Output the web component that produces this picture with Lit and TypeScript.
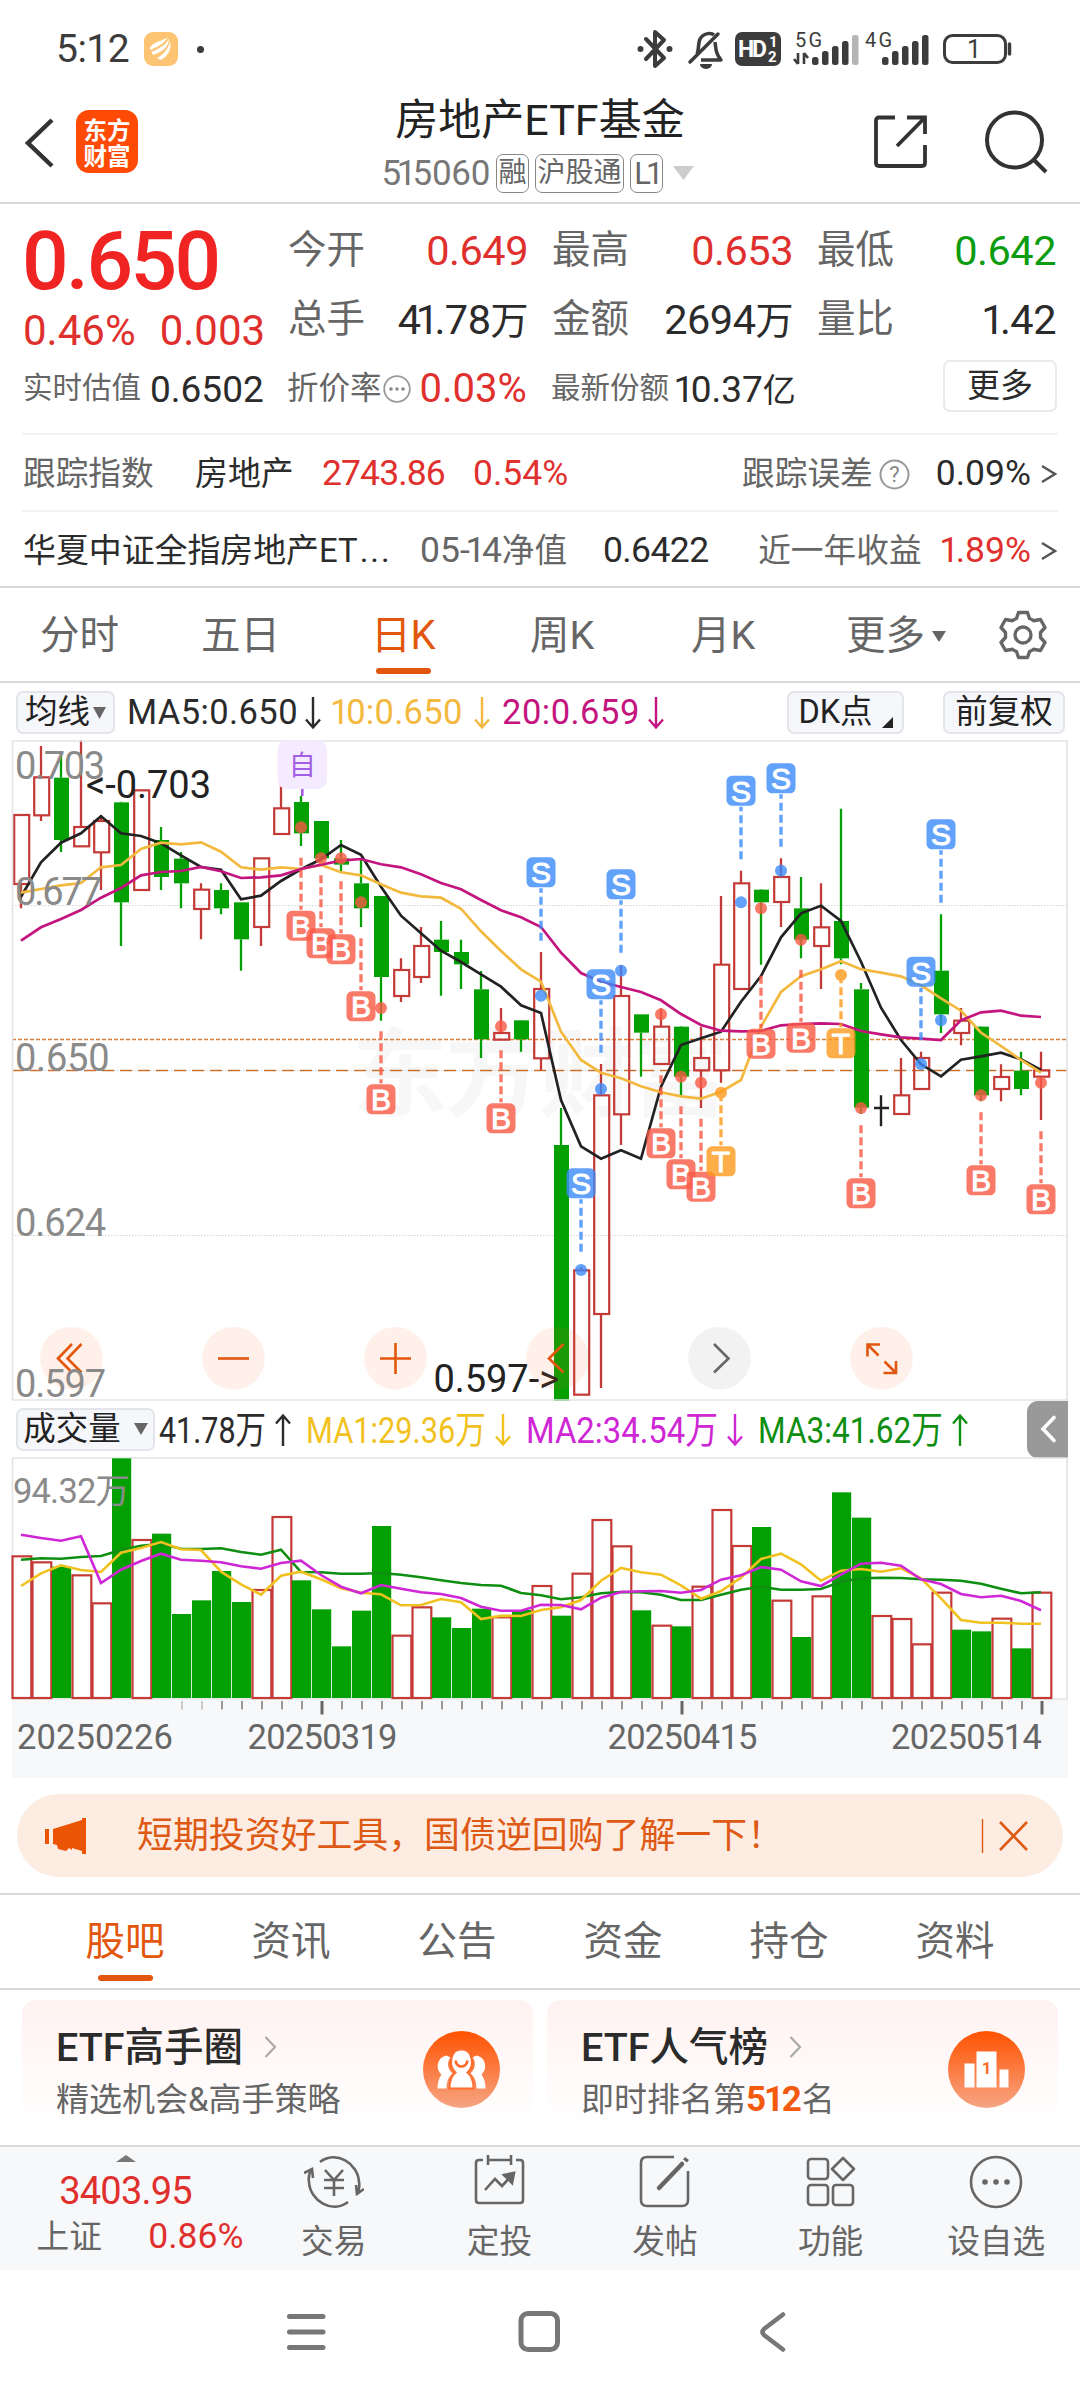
import { LitElement, html, svg, css } from "lit";
import { customElement } from "lit/decorators.js";

type Kind = "r" | "g" | "x";

/* One row per trading day: kind, high, body top, body bottom, low (thirds of a pixel below y=730). */
const CANDLES: [Kind, number, number, number, number][] = [
  ["r", 252, 255, 462, 535], ["r", 48, 142, 256, 273], ["g", 70, 143, 330, 366], ["r", 30, 291, 349, 350],
  ["r", 255, 273, 367, 480], ["g", 215, 217, 517, 648], ["r", 180, 181, 480, 480], ["g", 291, 330, 441, 480],
  ["g", 366, 386, 460, 535], ["r", 460, 479, 537, 628], ["g", 460, 480, 535, 553], ["g", 517, 517, 628, 722],
  ["r", 384, 385, 591, 648], ["r", 142, 235, 312, 312], ["g", 198, 216, 310, 348], ["g", 273, 273, 385, 395],
  ["g", 330, 385, 404, 425], ["g", 385, 460, 535, 591], ["g", 498, 498, 741, 872], ["r", 685, 720, 798, 816],
  ["r", 591, 648, 741, 759], ["g", 573, 629, 666, 797], ["g", 629, 666, 703, 777], ["g", 723, 778, 928, 984],
  ["r", 834, 909, 929, 929], ["g", 870, 871, 928, 965], ["r", 666, 777, 985, 1020], ["g", 1134, 1245, 2013, 2013],
  ["r", 1612, 1621, 1994, 1994], ["r", 1002, 1096, 1752, 1974], ["r", 705, 798, 1153, 1245], ["g", 853, 853, 908, 1040],
  ["r", 835, 890, 1002, 1002], ["g", 889, 890, 1040, 1096], ["r", 890, 984, 1021, 1134], ["r", 498, 704, 1021, 1058],
  ["r", 422, 460, 777, 777], ["g", 478, 479, 517, 704], ["r", 385, 441, 516, 591], ["g", 441, 535, 629, 685],
  ["r", 460, 592, 648, 777], ["g", 236, 573, 685, 703], ["g", 759, 778, 1133, 1152], ["x", 1096, 1134, 1134, 1189],
  ["r", 984, 1096, 1152, 1152], ["r", 965, 984, 1077, 1077], ["g", 553, 722, 853, 909], ["r", 834, 872, 909, 946],
  ["g", 889, 890, 1096, 1114], ["r", 1003, 1041, 1077, 1114], ["g", 965, 1022, 1077, 1096], ["r", 965, 1021, 1040, 1170],
];
const MA5 = [500, 397, 338, 310, 259, 310, 318, 340, 376, 411, 419, 508, 497, 453, 418, 388, 345, 374, 470, 557, 610, 662, 696, 733, 770, 826, 849, 1110, 1249, 1286, 1261, 1286, 1070, 945, 925, 905, 815, 738, 622, 550, 527, 573, 695, 833, 930, 1003, 1039, 989, 979, 968, 988, 1020];
const MA10 = [488, 477, 466, 459, 412, 405, 357, 338, 343, 337, 365, 412, 419, 412, 417, 405, 427, 436, 463, 488, 499, 503, 536, 604, 663, 718, 755, 905, 990, 1028, 1045, 1069, 1087, 1099, 1106, 1085, 1050, 890, 786, 739, 718, 694, 718, 728, 739, 766, 805, 842, 908, 948, 990, 1028];
const MA20 = [632, 592, 567, 540, 503, 474, 436, 426, 423, 411, 424, 444, 442, 436, 417, 404, 392, 387, 403, 412, 433, 459, 478, 510, 541, 562, 591, 668, 729, 755, 771, 786, 811, 852, 885, 902, 904, 903, 886, 882, 880, 882, 903, 913, 922, 926, 930, 871, 847, 842, 857, 861];

/* Trade marks: letter, day, badge centre, dot centre. */
const MARKS: ["B" | "S" | "T", number, number, number][] = [
  ["B", 14, 587, 292], ["B", 15, 640, 385], ["B", 16, 658, 385], ["B", 17, 829, 517], ["B", 18, 1108, 834],
  ["B", 24, 1165, 889], ["B", 32, 1240, 853], ["B", 33, 1333, 1040], ["B", 34, 1370, 1058], ["B", 37, 941, 535],
  ["B", 39, 923, 629], ["B", 42, 1390, 1134], ["B", 48, 1351, 1096], ["B", 51, 1408, 1058],
  ["T", 41, 940, 735], ["T", 35, 1294, 1088],
  ["S", 26, 427, 797], ["S", 30, 463, 722], ["S", 29, 763, 1077], ["S", 28, 1360, 1620],
  ["S", 36, 182, 517], ["S", 38, 145, 422], ["S", 46, 313, 871], ["S", 45, 725, 1002],
];
const MARK_COLOR = { B: "#fa5a46", S: "#3b8bfa", T: "#fd9a1c" };

/* Volume tops in thirds of a pixel below y=1400. */
const VOL = [466, 484, 500, 523, 607, 175, 417, 401, 642, 601, 513, 606, 567, 348, 541, 628, 739, 632, 378, 704, 619, 652, 684, 626, 649, 630, 555, 647, 518, 357, 436, 631, 674, 679, 557, 327, 435, 381, 599, 711, 586, 277, 353, 645, 654, 730, 575, 689, 694, 653, 745, 575];
const VOL_KIND = "rrgrrgrgggggrrgggggrrgggrgrgrrrgrgrrrgrgrggrrrrggrgr";
const V1 = [558, 520, 496, 510, 516, 458, 444, 426, 448, 450, 515, 553, 584, 527, 515, 538, 565, 578, 583, 616, 615, 597, 607, 657, 647, 648, 630, 622, 600, 542, 504, 517, 524, 556, 596, 573, 533, 477, 461, 493, 542, 512, 507, 515, 505, 535, 595, 660, 668, 668, 671, 671];
const V2 = [404, 414, 422, 409, 549, 509, 483, 461, 479, 482, 487, 499, 506, 489, 482, 525, 560, 580, 555, 566, 577, 582, 594, 620, 632, 632, 614, 615, 628, 593, 576, 574, 573, 578, 570, 539, 526, 501, 509, 544, 558, 524, 491, 488, 497, 538, 552, 582, 592, 587, 603, 631];
const V3 = [479, 475, 476, 471, 468, 450, 437, 432, 446, 447, 445, 456, 464, 449, 516, 517, 521, 521, 519, 524, 532, 541, 549, 555, 557, 579, 586, 598, 592, 580, 576, 577, 584, 600, 600, 584, 569, 560, 569, 569, 567, 545, 535, 533, 534, 538, 539, 542, 551, 566, 580, 577];

const dayX = (i: number) => 21 + i * 20;
const priceY = (v: number) => 730 + v / 3;
const volY = (v: number) => 1400 + v / 3;
const line = (vals: number[], y: (v: number) => number) => vals.map((v, i) => `${dayX(i)},${y(v).toFixed(1)}`).join(" ");

const RED = "#c43a37";
const GREEN = "#03a003";

@customElement("price-chart")
class PriceChart extends LitElement {
  static styles = css`
    :host { display: block; height: 661px; }
    svg { display: block; }
    text { font-family: Roboto, "Noto Sans CJK SC", sans-serif; }
    .axis { font-size: 38px; fill: #8a8a8a; }
    .note { font-size: 38px; fill: #222; }
    .badge { font: 500 30px "Liberation Sans", sans-serif; fill: #fff; stroke: #fff; stroke-width: 1; text-anchor: middle; }
    .own { font-size: 27px; fill: #a35fe3; text-anchor: middle; }
    .mark { font-size: 96px; font-weight: 700; fill: #f7f7f8; }
    .icon { fill: none; stroke: #e2570d; stroke-width: 2.6; }
    .icon.off { stroke: #666; }
  `;

  candle([kind, hi, top, bottom, lo]: [Kind, number, number, number, number], i: number) {
    const c = dayX(i), y1 = priceY(top), y2 = priceY(bottom);
    if (kind === "x") return svg`<path d="M${c} ${priceY(hi)}V${priceY(lo)}M${c - 7} ${y1}H${c + 8}" stroke="#222" stroke-width="2.4"/>`;
    const color = kind === "r" ? RED : GREEN;
    return svg`
      <path d="M${c} ${priceY(hi)}V${y1}M${c} ${y2}V${priceY(lo)}" stroke=${color} stroke-width="2.3"/>
      <rect x=${kind === "r" ? c - 6.8 : c - 7} y=${y1} width="15" height=${y2 - y1}
        fill=${kind === "r" ? "none" : color} stroke=${kind === "r" ? color : "none"} stroke-width="2.2"/>`;
  }

  tradeMark([letter, day, badge, dot]: ["B" | "S" | "T", number, number, number]) {
    const c = dayX(day), y = priceY(badge), color = MARK_COLOR[letter];
    const dash = letter === "S" ? `M${c} ${y + 68.5}V${y + 16}` : `M${c} ${y - 68}V${y - 16}`;
    return svg`
      <g opacity="0.8">
        <circle cx=${c} cy=${priceY(dot)} r="6" fill=${color}/>
        <path d=${dash} stroke=${color} stroke-width="3.4" stroke-dasharray="8 4"/>
        <rect x=${c - 14.5} y=${y - 15} width="29" height="30" rx="5.5" fill=${color}/>
      </g>
      <text class="badge" x=${c} y=${y + 11}>${letter}</text>`;
  }

  button(x: number, icon: unknown, fill = "rgba(255,110,40,0.1)") {
    return svg`<circle cx=${x} cy="1358.3" r="31.4" fill=${fill}/>${icon}`;
  }

  render() {
    return html`<svg width="1080" height="661" viewBox="0 740 1080 661">
      <text class="mark" x="352" y="1108" textLength="376">东方财富</text>
      <g stroke="#d4d4d4" stroke-width="1" stroke-dasharray="1.5 1.5">
        <path d="M12 905.5H1067M12 1070.5H1067M12 1235.5H1067"/>
      </g>
      <path d="M12 1039.5H1067" stroke="#df7f3d" stroke-width="1.4" stroke-dasharray="4 2"/>
      <path d="M12 1070.5H1067" stroke="#c9702f" stroke-width="1.5" stroke-dasharray="12 6"/>
      ${CANDLES.map((c, i) => this.candle(c, i))}
      <g fill="none" stroke-width="2.7">
        <polyline points=${line(MA5, priceY)} stroke="#222"/>
        <polyline points=${line(MA10, priceY)} stroke="#f3b93f"/>
        <polyline points=${line(MA20, priceY)} stroke="#c4157f"/>
      </g>
      <path d="M12.5 741V1400M1067 741V1400M12 741H1068M12 1400H1068" stroke="#e3e3e5" stroke-width="1.6"/>
      ${MARKS.map((m) => this.tradeMark(m))}
      <rect x="277.5" y="740.5" width="49.5" height="48.5" rx="9" fill="#f5ebff"/>
      <text class="own" x="302.3" y="775">自</text>
      <path d="M302.3 789V796" stroke="#a35fe3" stroke-width="2.6"/>
      <text class="axis" x="15" y="778.5" textLength="90">0.703</text>
      <text class="axis" x="15" y="905" textLength="87">0.677</text>
      <text class="axis" x="15" y="1070.5" textLength="94.5">0.650</text>
      <text class="axis" x="15" y="1235.5" textLength="91">0.624</text>
      <text class="note" x="86" y="798" textLength="125">&lt;-0.703</text>
      <text class="note" x="433.5" y="1392" textLength="125.5">0.597-&gt;</text>
      ${this.button(71.5, svg`<path class="icon" d="M72 1344L58 1358.5L72 1372.5M81.5 1344L67.5 1358.5L81.5 1372.5"/>`)}
      ${this.button(233.5, svg`<path class="icon" d="M218 1358.5H249"/>`)}
      ${this.button(395.5, svg`<path class="icon" d="M380 1358.5H411M395.5 1343V1374"/>`)}
      ${this.button(557.5, svg`<path class="icon" d="M563.5 1344L549 1358.5L563.5 1372.5"/>`)}
      ${this.button(719.5, svg`<path class="icon off" d="M714 1344L728.5 1358.5L714 1372.5"/>`, "rgba(0,0,0,0.05)")}
      ${this.button(881.5, svg`<path class="icon" d="M867.5 1356.5V1344.5H880M867.5 1344.5L878.5 1355.5M896 1361V1373H883.5M896 1373L884.5 1361.5"/>`)}
      <text class="axis" x="15" y="1397" textLength="91">0.597</text>
    </svg>`;
  }
}

@customElement("volume-chart")
class VolumeChart extends LitElement {
  static styles = css`
    :host { display: block; height: 321px; }
    svg { display: block; }
    text { font: 34.5px Roboto, "Noto Sans CJK SC", sans-serif; fill: #666; }
    .max { fill: #8a8a8a; }
  `;

  bar(v: number, i: number) {
    const c = dayX(i), y = volY(v);
    return VOL_KIND[i] === "r"
      ? svg`<rect x=${c - 8.5} y=${y + 1} width="18.8" height=${1697 - y} fill="none" stroke=${RED} stroke-width="2.2"/>`
      : svg`<rect x=${c - 9} y=${y} width="19.2" height=${1698 - y} fill=${GREEN}/>`;
  }

  render() {
    const ticks = Array.from({ length: 44 }, (_, k) => k + 8);
    return html`<svg width="1080" height="321" viewBox="0 1457 1080 321">
      <rect x="12" y="1700" width="1056" height="78" fill="#f7f8fa"/>
      <path d="M12.5 1458V1699M1067 1458V1699M12 1458H1068M12 1699H1068" stroke="#e3e3e5" stroke-width="1.6"/>
      ${VOL.map((v, i) => this.bar(v, i))}
      <g fill="none" stroke-width="2.6">
        <polyline points=${line(V3, volY)} stroke="#0f8f12"/>
        <polyline points=${line(V1, volY)} stroke="#f1c21f"/>
        <polyline points=${line(V2, volY)} stroke="#cf26d6"/>
      </g>
      ${ticks.map((i) => {
        const major = i === 15 || i === 33 || i === 51;
        return svg`<path d="M${dayX(i) + 1} 1701V${major ? 1714.5 : 1709.5}" stroke=${major ? "#666" : i < 10 ? "#ccc" : "#999"} stroke-width=${major ? 3 : 2}/>`;
      })}
      <text class="max" x="13" y="1502.5" textLength="117">94.32万</text>
      <text x="17" y="1748.5" textLength="156">20250226</text>
      <text x="247.5" y="1748.5" textLength="150">20250319</text>
      <text x="607.5" y="1748.5" textLength="150">20250415</text>
      <text x="891" y="1748.5" textLength="151">20250514</text>
    </svg>`;
  }
}

const arrow = (up: boolean) => html`<svg class="arrow" width="18" height="34" viewBox="0 0 18 34"
  ><path d=${up ? "M9 33V2M2 10.5L9 2.5L16 10.5" : "M9 1V32M2 23.5L9 31.5L16 23.5"} fill="none" stroke="currentColor" stroke-width="2.4"/></svg>`;

/* Proportional figures: the digit 1 takes less room than the others. */
const num = (s: string) => s.split(/(1)/).filter(Boolean).map((p) => (p === "1" ? html`<span class="one">1</span>` : p));

/* A condensed reading that fills an exact width. */
const fit = (s: string, width: number) => html`<svg class="fit" width=${width} height="44" viewBox="0 0 ${width} 44"
  ><text x="0" y="36" textLength=${width} lengthAdjust="spacingAndGlyphs" fill="currentColor">${s}</text></svg>`;

@customElement("app-root")
class AppRoot extends LitElement {
  static styles = css`
    :host { display: block; width: 1080px; height: 2400px; background: #fff; color: #2b2b2b; overflow: hidden;
      font-family: Roboto, "Noto Sans CJK SC", sans-serif; line-height: 1; }
    * { box-sizing: border-box; }
    svg { display: block; flex: none; }
    .row { display: flex; align-items: center; white-space: nowrap; }
    .one { margin: 0 -0.1em 0 -0.12em; }
    .red { color: #e0302d; } .green { color: #0c9c10; } .gray { color: #666; }

    .status { height: 98px; padding: 0 65px 0 56px; color: #3c3c3c; }
    .clock { font-size: 39px; width: 88px; letter-spacing: -0.5px; }
    .status .dot { width: 7px; height: 7px; border-radius: 50%; background: #3c3c3c; margin-left: 19px; }
    .status .sys { margin-left: auto; }

    .head { height: 106px; border-bottom: 2px solid #d9d9d9; padding: 0 31px 0 24px; align-items: flex-start; }
    .back { margin-top: 20px; }
    .logo { width: 62px; height: 63px; margin: 12px 0 0 22px; border-radius: 13px; background: #ff4a05; color: #fff;
      display: grid; place-content: center; font: 700 23.5px/26px "Noto Sans CJK SC", sans-serif; text-align: center; }
    .titles { flex: 1; display: flex; flex-direction: column; align-items: center; margin-left: 64px; }
    .title { font-size: 43px; line-height: 50px; margin-top: -3px; color: #222; margin-left: 4px; }
    .sub { font-size: 35px; color: #777; gap: 6px; height: 42px; margin-top: 7px; }
    .sub .code { letter-spacing: -0.3px; }
    .chip { border: 1.5px solid #888; border-radius: 7px; height: 39px; font-size: 28px; line-height: 35px; padding: 0 1.5px; color: #666; }
    .chip.l1 { font-size: 31px; line-height: 37px; padding: 0 3px; letter-spacing: -1px; }
    .tri { margin-left: 4px; }
    .share { margin: 17px 0 0; } .search { margin: 12px 0 0 57px; }

    .quote { padding: 0 22px; height: 384px; border-bottom: 2px solid #d9d9d9; }
    .facts { display: grid; grid-template-columns: 264px 264px 265px 241px; height: 229px; }
    .col { display: flex; flex-direction: column; }
    .price { font-size: 82px; font-weight: 500; color: #f12424; height: 82px; margin-top: 16px; letter-spacing: -2.5px; }
    .chg { font-size: 42px; height: 52px; gap: 24px; padding-left: 1px; margin-top: 3px; }
    .kv { justify-content: space-between; height: 69px; padding: 2px 22px 0 2px; font-size: 41.5px; }
    .kv:first-child { margin-top: 11px; }
    .kv > :last-child { letter-spacing: -0.5px; }
    .kv .k { font-size: 38.5px; color: #666; }
    .kv .w { font-size: 38px; }
    .last .kv { padding-right: 0; }
    .mini { height: 56px; font-size: 37px; padding-left: 1px; margin-top: 8px; gap: 9px; }
    .col:first-child .mini { margin-top: 4px; }
    .mini .k { font-size: 29.5px; color: #666; }
    .mini .k.mid { font-size: 31.5px; margin-right: -9px; }
    .mini .disc { margin: 0 -2px 0 0; }
    .mini .prem { font-size: 40px; }
    .mini .yi { font-size: 33px; }
    .more { margin: 7px -1px 0 auto; width: 114px; height: 52px; border: 2px solid #e9eaec; border-radius: 7px; font-size: 33px; display: grid; place-content: center; padding-bottom: 1px; }
    .trk { height: 77px; border-top: 2px solid #f3f3f5; font-size: 35.5px; padding: 3px 1px 0; }
    .trk .k { font-size: 32.7px; color: #666; }
    .trk .n { font-size: 32.9px; }
    .trk .w172 { width: 172px; } .trk .w127 { width: 127px; } .trk .w397 { width: 397px; }
    .trk .pts { width: 151px; letter-spacing: -0.9px; }
    .trk .nav { width: 183px; } .trk .navv { letter-spacing: -0.6px; }
    .trk .err { margin-left: auto; } .trk .q { margin: 0 26px 0 6px; }
    .trk .tail { margin-right: 10px; } .trk .year { margin: 0 22px 0 auto; }
    .dots { letter-spacing: 2px; margin-left: 2px; }

    .tabs { height: 95px; border-bottom: 2px solid #d9d9d9; font-size: 39.5px; color: #666; padding-left: 40px; }
    .tab { position: relative; height: 93px; display: flex; align-items: center; padding-top: 3px; }
    .tab.on { color: #e2570d; }
    .tab.on::after { content: ""; position: absolute; left: 50%; margin-left: -27.5px; width: 55px; height: 6px; border-radius: 3px; background: #e2570d; bottom: 7px; }
    .tabs .t1 { width: 161px; } .tabs .t2 { width: 172px; } .tabs .t3 { width: 60px; margin-right: 97px; font-size: 40px; }
    .tabs .t3 span { margin-left: -2px; letter-spacing: -0.5px; }
    .tabs .t5 { width: 155px; } .tabs .t6 { width: 152px; gap: 7px; }

    .ma { height: 57px; padding: 2px 15px 0 16px; font-size: 34.5px; }
    .ma .m5 { margin-left: 12px; width: 177px; letter-spacing: 0.4px; }
    .ma .m10 { margin-left: 12px; width: 139px; letter-spacing: 0.3px; }
    .ma .m20 { margin-left: 11px; width: 145px; letter-spacing: 0.5px; }
    .y { color: #f3b93f; } .m { color: #c4157f; }
    .vy { color: #f1c21f; } .vm { color: #cf26d6; } .vg { color: #0f8f12; }
    .box { height: 43px; border: 2px solid #e3e5ea; border-radius: 7px; background: #f6f7fa; color: #222; font-size: 32.5px;
      display: flex; align-items: center; justify-content: center; flex: none; }
    .box.avg { width: 99px; gap: 3px; } .box.dk { width: 117px; margin-left: auto; gap: 9px; }
    .box.adj { width: 122px; margin-left: 39px; } .box.vo { width: 139px; gap: 13px; margin-right: 4px; }
    .dk svg { margin-top: 20px; }
    .vol { height: 56px; padding: 0 12px 0 16px; font-size: 37.5px; }
    .vol .arrow { margin: 2px 14px 0 8px; }
    .drawer { margin-left: auto; width: 41px; height: 57px; border-radius: 11px 0 0 11px; background: #999; display: grid; place-content: center; }

    .ad { margin: 16px 17px 16px; height: 83px; border-radius: 42px; background: #fcece2; color: #de5a14; font-size: 35.9px; padding: 0 34px 0 27px; }
    .ad .msg { margin: 3px auto 0 51px; }
    .tabs2 { height: 97px; border-top: 2px solid #d9d9d9; border-bottom: 2px solid #d9d9d9; padding: 0 42px; font-size: 39.5px; color: #666; }
    .tabs2 .tab { flex: 1; justify-content: center; padding-top: 1px; }
    .cards { display: flex; gap: 14px; padding: 10px 22px 0; height: 155px; }
    .card { flex: 1; height: 130px; border-radius: 14px 14px 0 0; background: linear-gradient(#fff2f1, #fff); padding: 0 33px 0 34px; display: flex; align-items: center; justify-content: space-between; }
    .ct { font-size: 39.5px; font-weight: 500; color: #2b2b2b; gap: 21px; height: 46px; margin-top: 17px; }
    .ct svg { margin-top: -3px; }
    .cs { font-size: 33px; color: #666; height: 46px; margin-top: 5px; }
    .cs b { color: #f25a10; font-size: 35px; font-weight: 700; letter-spacing: -2.2px; padding-right: 2px; }
    .card > .disc { margin-top: 8px; }

    .bar { height: 125px; border-top: 2px solid #d9d9d9; background: #f7f8fa; }
    .idx { width: 251px; height: 123px; padding-top: 8px; display: flex; flex-direction: column; align-items: center; }
    .idx .pts { font-size: 38px; height: 42px; letter-spacing: -0.8px; margin-top: 8px; }
    .idx .pct { font-size: 35.5px; width: 206px; justify-content: space-between; height: 44px; margin: 3px 0 0 30px; }
    .idx .pct .gray { font-size: 32.7px; margin-left: -1px; }
    .item { width: 165.6px; height: 123px; display: flex; flex-direction: column; align-items: center; font-size: 32.7px; color: #666; }
    .item svg { margin: 7px 0 16px; }
    .sysnav { height: 130px; }
  `;

  item(icon: unknown, label: string) {
    return html`<div class="item"><svg width="60" height="56" viewBox="-30 -28 60 56" fill="none" stroke="#666" stroke-width="2.6">${icon}</svg><span>${label}</span></div>`;
  }

  bars(x: number, lastDim: boolean) {
    return [0, 1, 2, 3, 4].map((k) => svg`<rect x=${x + k * 10} y=${[57, 51, 46, 41, 35][k]} width="6.5" height=${[8, 14, 19, 24, 30][k]} rx="2.5" fill=${lastDim && k === 4 ? "#b5b5b5" : "#3c3c3c"}/>`);
  }

  render() {
    const gt = html`<svg width="16" height="22" viewBox="0 0 16 22"><path d="M1 3L14 11L1 19" fill="none" stroke="#555" stroke-width="2.4"/></svg>`;
    const caret = (w: number, h: number, c = "#666") => html`<svg width=${w} height=${h} viewBox="0 0 10 10" preserveAspectRatio="none"><path d="M0 0H10L5 10Z" fill=${c}/></svg>`;
    return html`
      <div class="row status">
        <span class="clock">5:12</span>
        <svg width="34" height="34" viewBox="0 0 34 34"><rect width="34" height="34" rx="9" fill="#fdc473"/>
          <path d="M6 16C8 10 19 9 24 5C20 12 13 15 6 18ZM7.500 20C15 17 22 13 25 6.500C25 15 18 20 9 23ZM13 26C20 22 25 16 26 9C28 17 24 24 17 28Z" fill="#fff"/></svg>
        <span class="dot"></span>
        <svg class="sys" width="380" height="98" viewBox="635 0 380 98">
          <g fill="none" stroke="#3c3c3c" stroke-width="4" stroke-linejoin="round" stroke-linecap="round">
            <path d="M646 39L664 58L655 66V32L664 40L646 59"/>
            <path d="M690 62L718 34" stroke-width="3.5"/>
            <path d="M697 54C699 50 698 43 700 39C704 32 712 33 714 35M715 42C716 50 716 54 721 60H701" stroke-width="3.5" stroke-linecap="butt"/>
          </g>
          <circle cx="640.5" cy="49" r="3" fill="#3c3c3c"/><circle cx="669.5" cy="49" r="3" fill="#3c3c3c"/>
          <path d="M700 64H712A6 5 0 0 1 700 64Z" fill="#3c3c3c"/>
          <rect x="735" y="32" width="46" height="34" rx="7" fill="#3c3c3c"/>
          <g fill="#fff" font-family="Roboto, sans-serif" font-weight="700">
            <text x="738" y="57" font-size="23" textLength="29">HD</text>
            <text x="769" y="47" font-size="15">1</text><text x="768" y="62" font-size="15">2</text>
          </g>
          <g fill="#3c3c3c" font-family="Roboto, sans-serif" font-size="20">
            <text x="795" y="47" textLength="27">5G</text><text x="865" y="47" textLength="27">4G</text>
            <text x="967" y="58" font-size="25">1</text>
          </g>
          <path d="M798 53V64M794 59L798 64M804 64V53M804 53L808 58" stroke="#3c3c3c" stroke-width="2.6" fill="none"/>
          ${this.bars(812, true)}${this.bars(882, false)}
          <rect x="944.5" y="35.5" width="61" height="27" rx="8" fill="none" stroke="#3c3c3c" stroke-width="3"/>
          <path d="M1009.5 44V54" stroke="#3c3c3c" stroke-width="3.5" stroke-linecap="round"/>
        </svg>
      </div>

      <div class="row head">
        <svg class="back" width="30" height="50" viewBox="0 0 30 50"><path d="M28 2L4 25L28 48" fill="none" stroke="#333" stroke-width="4.5"/></svg>
        <div class="logo"><span>东方</span><span>财富</span></div>
        <div class="titles">
          <div class="title">房地产ETF基金</div>
          <div class="row sub"><span class="code">${num("515060")}</span><span class="chip">融</span><span class="chip">沪股通</span><span class="chip l1">${num("L1")}</span>
            <span class="tri">${caret(21, 14, "#ccc")}</span></div>
        </div>
        <svg class="share" width="54" height="54" viewBox="0 0 54 54" fill="none" stroke="#333" stroke-width="3.8">
          <path d="M21 2.500H5Q2 2.500 2 5.500V48Q2 51 5 51H48Q51 51 51 48V30M51 19V2.500H33M51 2.500L23 31"/></svg>
        <svg class="search" width="64" height="64" viewBox="0 0 64 64" fill="none" stroke="#333" stroke-width="4"><circle cx="29.5" cy="30" r="27.5"/><path d="M48 49L61 62"/></svg>
      </div>

      <div class="quote">
        <div class="facts">
          <div class="col">
            <div class="price">0.650</div>
            <div class="row chg red"><span>0.46%</span><span>0.003</span></div>
            <div class="row mini"><span class="k">实时估值</span><span>0.6502</span></div>
          </div>
          <div class="col">
            <div class="row kv"><span class="k">今开</span><span class="red">0.649</span></div>
            <div class="row kv"><span class="k">总手</span><span>${num("41.78")}<span class="w">万</span></span></div>
            <div class="row mini"><span class="k mid">折价率</span>
              <svg class="disc" width="31" height="30" viewBox="-15 -15 31 30"><circle r="12.8" fill="none" stroke="#999" stroke-width="1.8"/><g fill="#888"><circle cx="-6" r="1.8"/><circle r="1.8"/><circle cx="6" r="1.8"/></g></svg>
              <span class="red prem">0.03%</span></div>
          </div>
          <div class="col">
            <div class="row kv"><span class="k">最高</span><span class="red">0.653</span></div>
            <div class="row kv"><span class="k">金额</span><span>2694<span class="w">万</span></span></div>
            <div class="row mini"><span class="k">最新份额</span><span>${num("10.37")}<span class="yi">亿</span></span></div>
          </div>
          <div class="col last">
            <div class="row kv"><span class="k">最低</span><span class="green">0.642</span></div>
            <div class="row kv"><span class="k">量比</span><span>${num("1.42")}</span></div>
            <div class="more">更多</div>
          </div>
        </div>
        <div class="row trk">
          <span class="k w172">跟踪指数</span><span class="n w127">房地产</span>
          <span class="red pts">2743.86</span><span class="red">0.54%</span>
          <span class="k err">跟踪误差</span>
          <svg class="q" width="31" height="31" viewBox="0 0 31 31"><circle cx="15.5" cy="15.5" r="14" fill="none" stroke="#999" stroke-width="2"/><text x="15.5" y="23" text-anchor="middle" font-size="22" fill="#888">?</text></svg>
          <span class="tail">0.09%</span>${gt}
        </div>
        <div class="row trk">
          <span class="n w397">华夏中证全指房地产ET<span class="dots">...</span></span>
          <span class="gray nav">${num("05-14")}<span class="k">净值</span></span><span class="navv">0.6422</span>
          <span class="k year">近一年收益</span><span class="red tail">${num("1.89%")}</span>${gt}
        </div>
      </div>

      <div class="row tabs">
        <div class="tab t1">分时</div><div class="tab t2">五日</div>
        <div class="tab on t3"><span>日K</span></div><div class="tab t1">周K</div>
        <div class="tab t5">月K</div><div class="tab t6">更多${caret(14, 11)}</div>
        <svg width="50" height="50" viewBox="-25 -25 50 50" fill="none" stroke="#666" stroke-width="3.4" stroke-linejoin="round">
          <circle r="8"/><path d="M-4.500 -22.500H4.500L6.500 -16.500Q8.500 -15.700 10.500 -14.300L17.500 -15.500L22 -7.500L17.500 -2.500V2.500L22 7.500L17.500 15.500L10.500 14.300Q8.500 15.700 6.500 16.500L4.500 22.500H-4.500L-6.500 16.500Q-8.500 15.700 -10.500 14.300L-17.500 15.500L-22 7.500L-17.500 2.500V-2.500L-22 -7.500L-17.500 -15.500L-10.500 -14.300Q-8.500 -15.700 -6.500 -16.500Z"/></svg>
      </div>

      <div class="row ma">
        <span class="box avg">均线${caret(13, 12)}</span>
        <span class="m5">MA5:0.650</span>${arrow(false)}
        <span class="row y"><span class="m10">${num("10:0.650")}</span>${arrow(false)}</span>
        <span class="row m"><span class="m20">20:0.659</span>${arrow(false)}</span>
        <span class="box dk">DK点<svg width="11" height="11"><path d="M11 0V11H0Z" fill="#222"/></svg></span>
        <span class="box adj">前复权</span>
      </div>

      <price-chart></price-chart>

      <div class="row vol">
        <span class="box vo">成交量${caret(14, 12)}</span>
        <span class="row">${fit("41.78万", 107)}${arrow(true)}</span>
        <span class="row vy">${fit("MA1:29.36万", 180)}${arrow(false)}</span>
        <span class="row vm">${fit("MA2:34.54万", 192)}${arrow(false)}</span>
        <span class="row vg">${fit("MA3:41.62万", 185)}${arrow(true)}</span>
        <span class="drawer"><svg width="16" height="28" viewBox="0 0 16 28"><path d="M14 2.500L3 14L14 25.500" fill="none" stroke="#fff" stroke-width="3.6" stroke-linecap="round"/></svg></span>
      </div>

      <volume-chart></volume-chart>

      <div class="row ad">
        <svg width="42" height="38" viewBox="0 0 42 38" fill="#ea5404"><path d="M1 12H5V27H1ZM9 12L38 3V1H42V37H38V34L28 31V33L25 31L22 34L14 32L13 28L9 27Z"/></svg>
        <span class="msg">短期投资好工具，国债逆回购了解一下！</span>
        <svg width="48" height="34" viewBox="0 0 48 34" fill="none" stroke="#de5a14"><path d="M1.500 0V34" stroke-width="1.4"/><path d="M19 3L46 31M46 3L19 31" stroke-width="2.6"/></svg>
      </div>

      <div class="row tabs2">
        ${["股吧", "资讯", "公告", "资金", "持仓", "资料"].map((t, i) => html`<div class="tab ${i === 0 ? "on" : ""}">${t}</div>`)}
      </div>

      <div class="cards">
        <div class="card">
          <div><div class="row ct">ETF高手圈<svg width="13" height="24" viewBox="0 0 13 24"><path d="M1.500 2L11 12L1.500 22" fill="none" stroke="#aaa" stroke-width="2.2"/></svg></div>
            <div class="row cs">精选机会&amp;高手策略</div></div>
          <svg class="disc" width="77" height="77" viewBox="-38.5 -38.5 77 77">
            <defs><linearGradient id="a" x2="0" y2="1"><stop stop-color="#ff5200"/><stop offset="1" stop-color="#f6a584"/></linearGradient></defs>
            <circle r="38.5" fill="url(#a)"/>
            <g fill="#fff"><path d="M-15 -14C-25 -12 -26 0 -20 5C-23 9 -24 14 -24 19H-15C-15 12 -13 7 -9 4C-15 -2 -14 -8 -11 -12Z"/><path d="M15 -14C25 -12 26 0 20 5C23 9 24 14 24 19H15C15 12 13 7 9 4C15 -2 14 -8 11 -12Z"/>
            <path d="M0 -20C-12 -20 -13 -3 -6 3C-11 7 -12 13 -12 19H12C12 13 11 7 6 3C13 -3 12 -20 0 -20Z" stroke="#fc6e30" stroke-width="2"/></g>
            <path d="M-6 -9C-5 -1 5 -1 6 -9" fill="none" stroke="#fb6a2a" stroke-width="2.6"/></svg>
        </div>
        <div class="card">
          <div><div class="row ct">ETF人气榜<svg width="13" height="24" viewBox="0 0 13 24"><path d="M1.500 2L11 12L1.500 22" fill="none" stroke="#aaa" stroke-width="2.2"/></svg></div>
            <div class="row cs">即时排名第<b>512</b>名</div></div>
          <svg class="disc" width="77" height="77" viewBox="-38.5 -38.5 77 77">
            <defs><linearGradient id="b" x2="0" y2="1"><stop stop-color="#ff5200"/><stop offset="1" stop-color="#f6a584"/></linearGradient></defs>
            <circle r="38.5" fill="url(#b)"/><path d="M-22 -6H-12V18H-22ZM-10 -18H10V18H-10ZM13 0H22V18H13Z" fill="#fff"/>
            <text x="0" y="4" text-anchor="middle" font-size="17" font-weight="700" fill="#fb6a2a">1</text></svg>
        </div>
      </div>

      <div class="row bar">
        <div class="idx"><svg width="20" height="7"><path d="M0 7L10 0L20 7Z" fill="#777"/></svg>
          <div class="row pts red">3403.95</div>
          <div class="row pct"><span class="gray">上证</span><span class="red">0.86%</span></div></div>
        ${this.item(svg`<path d="M-14 -20C2 -32 24 -19 25 0C26 6 25 9 23 12M14 20C-2 32 -24 19 -25 0C-26 -6 -25 -9 -22 -13M-30 -9L-22 -13L-21 -4M30 7L23 12L22 3M-9 -12L0 -2L9 -12M0 -2V14M-10 -2H10M-10 6H10"/>`, "交易")}
        ${this.item(svg`<path d="M-16 -22H-20Q-23 -22 -23 -19V18Q-23 21 -20 21H21Q24 21 24 18V-19Q24 -22 21 -22H17M-11 -27V-17M12 -27V-17M-11 -22H12M-14 8L-4 -3L3 4L14 -8"/><path d="M5 -7L15 -9L13 1Z" fill="#666"/>`, "定投")}
        ${this.item(svg`<path d="M9 -25H-18Q-24 -25 -24 -19V18Q-24 24 -18 24H17Q23 24 23 18V-11"/><path d="M17 -18L-6 6" stroke-width="4.5" stroke-linecap="round"/><path d="M20 -21L22 -23.500" stroke-width="5"/>`, "发帖")}
        ${this.item(svg`<rect x="-23" y="-23" width="20" height="20" rx="3"/><rect x="-23" y="3" width="20" height="20" rx="3"/><rect x="2" y="3" width="20" height="20" rx="3"/><path d="M12 -24L23 -13L12 -2L1 -13Z" stroke-linejoin="round"/>`, "功能")}
        ${this.item(svg`<circle r="25"/><g fill="#666" stroke="none"><circle cx="-11" r="2.8"/><circle r="2.8"/><circle cx="11" r="2.8"/></g>`, "设自选")}
      </div>

      <svg class="sysnav" width="1080" height="130" viewBox="0 2270 1080 130" fill="none" stroke="#777" stroke-width="5" stroke-linecap="round">
        <path d="M289.500 2316.500H323M289.500 2332H323M289.500 2347.500H323"/>
        <rect x="521" y="2313.5" width="36.5" height="36" rx="7"/>
        <path d="M783 2314.500L764 2329Q761 2332 764 2335L783 2349.500" stroke-width="4.5"/>
      </svg>
    `;
  }
}
